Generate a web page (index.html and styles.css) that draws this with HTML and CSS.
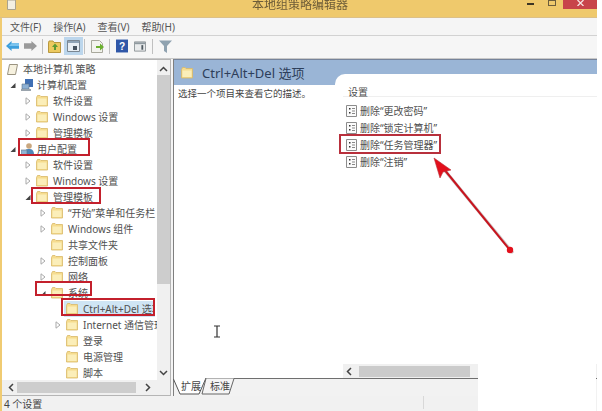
FILE: index.html
```html
<!DOCTYPE html>
<html lang="zh">
<head>
<meta charset="utf-8">
<title>本地组策略编辑器</title>
<link rel="stylesheet" href="styles.css">
</head>
<body>
<svg class="defs" width="0" height="0" aria-hidden="true">
  <symbol id="folder" viewBox="0 0 12 12">
    <path d="M.5 2.500V11h11V1.500H5L4 .5H1.500z" fill="#f6dc8e" stroke="#d9b968" stroke-width=".8"/>
    <path d="M1.500 3.500h9V10h-9z" fill="#fbeeb9"/>
  </symbol>
  <symbol id="closed" viewBox="0 0 6 8"><path d="M1 .8 5 4 1 7.200z" fill="#fff" stroke="#a9a9a9"/></symbol>
  <symbol id="open" viewBox="0 0 6 8"><path d="M5.500 2v5H.5z" fill="#444"/></symbol>
  <symbol id="setting" viewBox="0 0 11 12">
    <path d="M.5.5h10v11H.5z" fill="#fbfbfb" stroke="#8c8c8c"/>
    <path d="M3 3h1.500v1.500H3zM3 7h1.500v1.500H3z" fill="#333"/>
    <path d="M6 3.500h3M6 6h3M6 8.500h3" stroke="#888"/>
  </symbol>
</svg>
<div class="window">
  <header class="titlebar">
    <svg class="appicon" width="9" height="10" viewBox="0 0 9 10"><path d="M.5 0h8v9.500h-8z" fill="#f3efe2" stroke="#a9a38f"/></svg>
    <span class="title">本地组策略编辑器</span>
    <div class="winbtns">
      <span class="min"></span>
      <span class="max"></span>
      <span class="close"><svg width="7" height="6" viewBox="0 0 7 6"><path d="M.5 0 6.500 6M6.500 0 .5 6" stroke="#f6e2e2" stroke-width="1.300"/></svg></span>
    </div>
  </header>
  <nav class="menubar">
    <span>文件(F)</span><span>操作(A)</span><span>查看(V)</span><span>帮助(H)</span>
  </nav>
  <div class="toolbar">
    <svg width="13" height="12" viewBox="0 0 14 12"><path d="M0 6 6 .5V3h8v6H6v2.500z" fill="#3e9fdc"/><path d="M3 6 6 3h8v3z" fill="#7cc4ee"/></svg>
    <svg width="13" height="12" viewBox="0 0 14 12"><path d="M14 6 8 .5V3H0v6h8v2.500z" fill="#9a9a9a"/></svg>
    <i class="sep"></i>
    <svg width="13" height="13" viewBox="0 0 13 13"><path d="M.5 3V12.500h12V2.500H6L5 1H1z" fill="#ecc95f" stroke="#b9983e"/><path d="M4 7 7 3.500 10 7H8v3H6V7z" fill="#5c9a35"/></svg>
    <span class="tool-on"><svg width="13" height="12" viewBox="0 0 13 12"><path d="M.5.5h12v11H.5z" fill="#e8eef3" stroke="#7b8792"/><path d="M1 1h11v2H1z" fill="#8fa3b5"/><path d="M6 6h4v4H6z" fill="#47535e"/></svg></span>
    <i class="sep tight"></i>
    <svg class="nudge" width="13" height="13" viewBox="0 0 13 13"><path d="M.5.5h8l3 3v9H.5z" fill="#f3f3ee" stroke="#a8a89c"/><path d="M5 6h4V3.500L13 7l-4 3.500V8H5z" fill="#6bb02f"/></svg>
    <i class="sep"></i>
    <svg class="nudge" width="12" height="14" viewBox="0 0 13 14"><path d="M0 0h13v14H0z" fill="#2f57a8"/><text x="6.500" y="11" class="helpq">?</text></svg>
    <svg class="nudge" width="12" height="11" viewBox="0 0 13 11"><path d="M.5.5h12v10H.5z" fill="#e9ebec" stroke="#8b9296"/><path d="M1 1h11v2H1z" fill="#8f999f"/><path d="M8 4h2v5H8z" fill="#4f5a61"/></svg>
    <i class="sep nudge"></i>
    <svg class="nudge" width="13" height="13" viewBox="0 0 13 13"><path d="M0 .5h13L8 6v7L5 11V6z" fill="#8fa2b0"/></svg>
  </div>

  <main class="panes">
    <section class="treepane">
      <div class="treebody">
        <ul class="tree">
          <li class="row lv0"><svg class="rooticon" width="11" height="11" viewBox="0 0 11 11"><path d="M2.500.5h8L8.500 10.500H.5z" fill="#f6f1df" stroke="#9a9380"/></svg>本地计算机 策略</li>
          <li class="row lv1"><svg class="tw" width="6" height="8"><use href="#open"/></svg><svg class="pc" width="13" height="12" viewBox="0 0 13 12"><path d="M4 0h8v8H4z" fill="#3f6fb4"/><path d="M1 5h7v5H1z" fill="#8cb0d4" stroke="#5e7288" stroke-width=".6"/><path d="M0 10h10v2H0z" fill="#9aa4ad"/></svg>计算机配置</li>
          <li class="row lv2"><svg class="tw" width="6" height="8"><use href="#closed"/></svg><svg class="fd" width="12" height="12"><use href="#folder"/></svg>软件设置</li>
          <li class="row lv2"><svg class="tw" width="6" height="8"><use href="#closed"/></svg><svg class="fd" width="12" height="12"><use href="#folder"/></svg>Windows 设置</li>
          <li class="row lv2"><svg class="tw" width="6" height="8"><use href="#closed"/></svg><svg class="fd" width="12" height="12"><use href="#folder"/></svg>管理模板</li>
          <li class="row lv1"><svg class="tw" width="6" height="8"><use href="#open"/></svg><svg class="pc" width="13" height="12" viewBox="0 0 13 12"><circle cx="8" cy="3" r="2.800" fill="#c9a77f"/><path d="M3 12c0-5 2-6 5-6s5 1 5 6z" fill="#4f86b8"/><path d="M0 7h6v5H0z" fill="#8fb5d6" stroke="#5e7288" stroke-width=".6"/></svg>用户配置</li>
          <li class="row lv2"><svg class="tw" width="6" height="8"><use href="#closed"/></svg><svg class="fd" width="12" height="12"><use href="#folder"/></svg>软件设置</li>
          <li class="row lv2"><svg class="tw" width="6" height="8"><use href="#closed"/></svg><svg class="fd" width="12" height="12"><use href="#folder"/></svg>Windows 设置</li>
          <li class="row lv2"><svg class="tw" width="6" height="8"><use href="#open"/></svg><svg class="fd" width="12" height="12"><use href="#folder"/></svg>管理模板</li>
          <li class="row lv3"><svg class="tw" width="6" height="8"><use href="#closed"/></svg><svg class="fd" width="12" height="12"><use href="#folder"/></svg>“开始”菜单和任务栏</li>
          <li class="row lv3"><svg class="tw" width="6" height="8"><use href="#closed"/></svg><svg class="fd" width="12" height="12"><use href="#folder"/></svg>Windows 组件</li>
          <li class="row lv3"><span class="tw"></span><svg class="fd" width="12" height="12"><use href="#folder"/></svg>共享文件夹</li>
          <li class="row lv3"><svg class="tw" width="6" height="8"><use href="#closed"/></svg><svg class="fd" width="12" height="12"><use href="#folder"/></svg>控制面板</li>
          <li class="row lv3"><svg class="tw" width="6" height="8"><use href="#closed"/></svg><svg class="fd" width="12" height="12"><use href="#folder"/></svg>网络</li>
          <li class="row lv3"><svg class="tw" width="6" height="8"><use href="#open"/></svg><svg class="fd" width="12" height="12"><use href="#folder"/></svg>系统</li>
          <li class="row lv4"><span class="tw"></span><span class="selected"><svg class="fd" width="12" height="12"><use href="#folder"/></svg>Ctrl+Alt+Del 选项</span></li>
          <li class="row lv4"><svg class="tw" width="6" height="8"><use href="#closed"/></svg><svg class="fd" width="12" height="12"><use href="#folder"/></svg>Internet 通信管理</li>
          <li class="row lv4"><span class="tw"></span><svg class="fd" width="12" height="12"><use href="#folder"/></svg>登录</li>
          <li class="row lv4"><span class="tw"></span><svg class="fd" width="12" height="12"><use href="#folder"/></svg>电源管理</li>
          <li class="row lv4"><span class="tw"></span><svg class="fd" width="12" height="12"><use href="#folder"/></svg>脚本</li>
        </ul>
        <div class="vscroll">
          <svg width="9" height="6" viewBox="0 0 9 6"><path d="M1 5 4.500 1.500 8 5" fill="none" stroke="#444" stroke-width="1.500"/></svg>
          <span class="vthumb"></span>
          <svg class="vdown" width="9" height="6" viewBox="0 0 9 6"><path d="M1 1 4.500 4.500 8 1" fill="none" stroke="#444" stroke-width="1.500"/></svg>
        </div>
      </div>
      <div class="hscroll">
        <svg width="6" height="9" viewBox="0 0 6 9"><path d="M5 1 1.500 4.500 5 8" fill="none" stroke="#444" stroke-width="1.500"/></svg>
        <span class="hthumb"></span>
        <svg width="6" height="9" viewBox="0 0 6 9"><path d="M1 1 4.500 4.500 1 8" fill="none" stroke="#444" stroke-width="1.500"/></svg>
      </div>
    </section>

    <section class="detail">
      <div class="detailbody">
        <div class="desc">
          <div class="dhead"><svg width="12" height="12"><use href="#folder"/></svg><span>Ctrl+Alt+Del 选项</span></div>
          <p>选择一个项目来查看它的描述。</p>
        </div>
        <div class="settings">
          <div class="setcard">
            <div class="sethead">设置</div>
            <ul class="setlist">
              <li><svg width="11" height="12"><use href="#setting"/></svg>删除“更改密码”</li>
              <li><svg width="11" height="12"><use href="#setting"/></svg>删除“锁定计算机”</li>
              <li><svg width="11" height="12"><use href="#setting"/></svg>删除“任务管理器”</li>
              <li><svg width="11" height="12"><use href="#setting"/></svg>删除“注销”</li>
            </ul>
            <div class="listscroll">
              <svg width="6" height="9" viewBox="0 0 6 9"><path d="M5 1 1.500 4.500 5 8" fill="none" stroke="#444" stroke-width="1.500"/></svg>
              <span class="listthumb"></span>
            </div>
          </div>
        </div>
      </div>
      <div class="tabs">
        <svg class="tabshape" width="64" height="18" viewBox="0 0 64 18"><path d="M0 0 7 16H26L33 0" fill="#fff" stroke="#555"/><path d="M33 .5 29 16H56L61 .5" fill="#f5f5f5" stroke="#666"/></svg>
        <span class="tab first">扩展</span>
        <span class="tab">标准</span>
      </div>
    </section>
  </main>

  <footer class="status"><span>4 个设置</span><i></i></footer>
</div>

<div class="patch"></div>
<div class="mark m1"></div>
<div class="mark m2"></div>
<div class="mark m3"></div>
<div class="mark m4"></div>
<div class="mark m5"></div>
<svg class="annot" width="602" height="411" viewBox="0 0 602 411" aria-hidden="true">
  <path d="M513 253 442 167" stroke="#a8a0a0" stroke-width="3" fill="none" opacity=".6"/>
  <path d="M510 250 439 163" stroke="#c8141e" stroke-width="2" fill="none"/>
  <path d="M434 158 451 170 443 172 440 178z" fill="#e3101c" stroke="#b5323a" stroke-width=".6"/>
  <circle cx="510" cy="250" r="3.200" fill="#e3101c"/>
  <path d="M214 326h6M214 337h6M217 326v11" stroke="#333" stroke-width="1.200" fill="none"/>
</svg>
</body>
</html>
```

FILE: styles.css
```css
* { box-sizing: border-box; }
html, body { margin: 0; padding: 0; }
body {
  width: 602px;
  height: 411px;
  position: relative;
  overflow: hidden;
  background: #fff;
  color: #505050;
  font: 10px/16px "Noto Sans", "Noto Sans CJK SC", sans-serif;
}
ul { list-style: none; margin: 0; padding: 0; }
p { margin: 0; }
.defs { position: absolute; }

.window {
  width: 597px;
  height: 411px;
  display: flex;
  flex-direction: column;
  background: #f4f4f4;
  border-left: 2px solid #f0cb72;
  filter: blur(.45px);
}

/* title */
.titlebar {
  height: 18px;
  margin-left: -2px;
  background: #efc96c;
  border-bottom: 1px solid #dcc088;
  display: flex;
  align-items: flex-start;
  position: relative;
}
.appicon { margin-left: 7px; flex: none; }
.title {
  position: absolute;
  left: 252px;
  top: -3px;
  font-size: 12px;
  color: #6d5c38;
}
.winbtns {
  margin-left: auto;
  display: flex;
  align-items: flex-start;
}
.min { width: 7px; height: 2px; background: #3d3524; margin: 3px 14px 0 0; }
.max { width: 8px; height: 6px; border: 1px solid #6c5d3c; margin-right: 7px; }
.close {
  width: 34px;
  height: 9px;
  background: #c8444a;
  display: flex;
  justify-content: center;
}

/* menu */
.menubar {
  height: 18px;
  display: flex;
  gap: 12px;
  padding-left: 8px;
  align-items: center;
  background: #f5f5f5;
  border-bottom: 1px solid #d2d2d2;
  color: #555;
}
.menubar span { white-space: nowrap; }

/* toolbar */
.toolbar {
  height: 23px;
  display: flex;
  align-items: center;
  gap: 5px;
  padding: 0 0 2px 4px;
  background: #f6f6f6;
  border-bottom: 1px solid #c9c9c9;
}
.sep { width: 1px; height: 15px; background: #c0c0c0; }
.sep.tight { margin-left: -4px; }
.nudge { margin-left: 1px; }
.tool-on {
  width: 19px;
  height: 18px;
  margin-left: -2px;
  background: #bcd6ec;
  display: flex;
  align-items: center;
  justify-content: center;
}
.helpq {
  fill: #fff;
  font: bold 11px "Liberation Sans", sans-serif;
  text-anchor: middle;
}

/* panes */
.panes {
  flex: 1;
  min-height: 0;
  display: flex;
  gap: 2px;
}
.treepane {
  width: 169px;
  flex: none;
  display: flex;
  flex-direction: column;
  background: #fff;
  border: 1px solid #b5b5b5;
  border-left: 0;
}
.treebody { flex: 1; min-height: 0; display: flex; }
.tree { flex: 1; min-width: 0; padding: 1px 0 0 0; overflow: hidden; }
.row {
  height: 16px;
  display: flex;
  align-items: center;
  white-space: nowrap;
  overflow: hidden;
}
.row.lv0 { padding-left: 5px; }
.row.lv1 { padding-left: 8px; }
.row.lv2 { padding-left: 23px; }
.row.lv3 { padding-left: 38px; }
.row.lv4 { padding-left: 53px; }
.rooticon { margin-right: 5px; flex: none; }
.tw { width: 6px; height: 8px; flex: none; margin-right: 5px; }
.pc { flex: none; margin-right: 3px; }
.fd { flex: none; margin-right: 5px; }
.selected {
  width: 91px;
  height: 16px;
  flex: none;
  margin-left: -2px;
  padding-left: 2px;
  display: flex;
  align-items: center;
  overflow: hidden;
  background: #cfe5f4;
}

.vscroll {
  width: 13px;
  flex: none;
  background: #f0f0f0;
  display: flex;
  flex-direction: column;
  align-items: center;
  padding-top: 6px;
}
.vthumb { width: 13px; height: 209px; margin-top: 3px; background: #cdcdcd; }
.vdown { margin-top: auto; margin-bottom: 4px; }
.hscroll {
  height: 15px;
  flex: none;
  display: flex;
  align-items: center;
  gap: 3px;
  padding-left: 6px;
  background: #f0f0f0;
}
.hthumb { width: 119px; height: 11px; background: #cdcdcd; margin-right: 6px; }

.detail {
  flex: 1;
  min-width: 0;
  display: flex;
  flex-direction: column;
  border-left: 1px solid #7f7f7f;
}
.detailbody {
  flex: 1;
  min-height: 0;
  display: flex;
  background: #fff;
  border-top: 1px solid #76839a;
  border-bottom: 1px solid #6f6f6f;
}
.desc { width: 161px; flex: none; }
.dhead {
  height: 25px;
  background: #9ab5d6;
  display: flex;
  align-items: center;
  gap: 9px;
  padding-left: 7px;
  font-size: 13px;
  color: #2d3e5a;
  white-space: nowrap;
}
.desc p {
  padding: 1px 0 0 4px;
  font-size: 9.500px;
  color: #444;
  white-space: nowrap;
}
.settings {
  flex: 1;
  min-width: 0;
  background: linear-gradient(#9ab5d6 0 25px, #fff 25px);
  display: flex;
  padding-top: 14px;
}
.setcard {
  flex: 1;
  background: #fff;
  border-top-left-radius: 10px;
  padding-left: 8px;
  display: flex;
  flex-direction: column;
}
.sethead {
  height: 23px;
  padding: 10px 0 0 5px;
  border-bottom: 1px solid #efefef;
}
.setlist { padding-top: 5px; }
.setlist li {
  height: 17px;
  display: flex;
  align-items: center;
  gap: 3px;
  padding-left: 3px;
  white-space: nowrap;
}
.listscroll {
  margin-top: auto;
  height: 14px;
  display: flex;
  align-items: center;
  gap: 7px;
  padding-left: 3px;
  background: #f0f0f0;
}
.listthumb { width: 111px; height: 11px; background: #cbcbcb; }

.tabs {
  height: 17px;
  flex: none;
  display: flex;
  position: relative;
  padding-left: 7px;
  background: #f2f2f2;
  color: #444;
}
.tabshape { position: absolute; left: -1px; top: -1px; }
.tab { width: 20px; position: relative; white-space: nowrap; line-height: 15px; }
.tab.first { margin-right: 9px; }

.status {
  height: 15px;
  flex: none;
  position: relative;
  padding-left: 2px;
  background: #f1f1f1;
  line-height: 16px;
  color: #444;
}
.status i {
  position: absolute;
  left: 421px;
  top: 0;
  bottom: 2px;
  width: 1px;
  background: #d8d8d8;
}

/* overlays */
.patch {
  position: absolute;
  left: 478px;
  top: 350px;
  width: 118px;
  height: 61px;
  background: #fff;
}
.mark { position: absolute; border: 2px solid #c3202c; }
.m1 { left: 18px; top: 138px; width: 72px; height: 18px; }
.m2 { left: 31px; top: 187px; width: 70px; height: 17px; }
.m3 { left: 35px; top: 281px; width: 57px; height: 15px; }
.m4 { left: 61px; top: 298px; width: 94px; height: 18px; }
.m5 { left: 339px; top: 134px; width: 102px; height: 20px; border-color: #b8303c; }
.annot { position: absolute; left: 0; top: 0; }
```
